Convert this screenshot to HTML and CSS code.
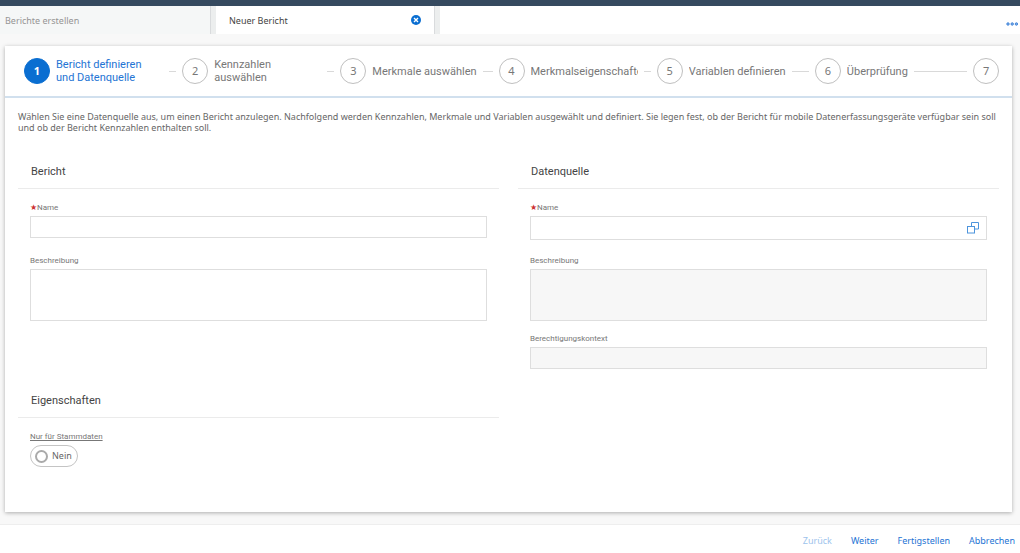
FILE: index.html
```html
<!DOCTYPE html>
<html lang="de">
<head>
    <meta charset="UTF-8">
    <meta name="viewport" content="width=device-width, initial-scale=1.0">
    <title>Neuer Bericht</title>
    <link rel="stylesheet" href="styles.css">
</head>
<body>
    <header class="tab-bar">
        <nav class="tabs">
            <a href="#" class="tab">Berichte erstellen</a>
            <div class="tab active">
                <span>Neuer Bericht</span>
                <button type="button" class="icon-button" aria-label="Schließen">
                    <svg width="10" height="10" viewBox="0 0 10 10">
                        <circle cx="5" cy="5" r="5" fill="#0a6ed1"/>
                        <path d="M3 3l4 4M7 3l-4 4" stroke="#fff" stroke-width="1.4"/>
                    </svg>
                </button>
            </div>
        </nav>
        <button type="button" class="icon-button more" aria-label="Mehr">
            <svg width="14" height="4" viewBox="0 0 14 4" fill="#8db6e8" stroke="#3f83d9">
                <circle cx="2" cy="2" r="1.2"/>
                <circle cx="6.2" cy="2" r="1.2"/>
                <circle cx="10.4" cy="2" r="1.2"/>
            </svg>
        </button>
    </header>

    <main>
        <form class="card" id="reportForm">
            <ol class="steps">
                <li class="step current"><span class="number">1</span><span class="step-label">Bericht definieren und&nbsp;Datenquelle</span></li>
                <li class="step"><span class="number">2</span><span class="step-label">Kennzahlen auswählen</span></li>
                <li class="step"><span class="number">3</span><span class="step-label">Merkmale auswählen</span></li>
                <li class="step"><span class="number">4</span><span class="step-label">Merkmalseigenschaften</span></li>
                <li class="step"><span class="number">5</span><span class="step-label">Variablen definieren</span></li>
                <li class="step"><span class="number">6</span><span class="step-label">Überprüfung</span></li>
                <li class="step"><span class="number">7</span></li>
            </ol>

            <div class="content">
                <p class="intro">Wählen Sie eine Datenquelle aus, um einen Bericht anzulegen. Nachfolgend werden Kennzahlen, Merkmale und Variablen ausgewählt und definiert. Sie legen fest, ob der Bericht für mobile Datenerfassungsgeräte verfügbar sein soll und ob der Bericht Kennzahlen enthalten soll.</p>

                <div class="sections">
                    <section>
                        <h2>Bericht</h2>
                        <div class="fields">
                            <div class="field name-field">
                                <label for="reportName" class="required">Name</label>
                                <input type="text" id="reportName" required>
                            </div>
                            <div class="field">
                                <label for="reportDescription">Beschreibung</label>
                                <textarea id="reportDescription"></textarea>
                            </div>
                        </div>
                    </section>

                    <section>
                        <h2>Datenquelle</h2>
                        <div class="fields">
                            <div class="field name-field">
                                <label for="sourceName" class="required">Name</label>
                                <div class="value-help">
                                    <input type="text" id="sourceName" required>
                                    <button type="button" class="icon-button" aria-label="Datenquelle auswählen">
                                        <svg width="12" height="12" viewBox="0 0 12 12" fill="none" stroke="#4d94dc">
                                            <path d="M4.5 4V.5h7v6.500H8"/>
                                            <rect x="0.500" y="4.500" width="7" height="6.500"/>
                                        </svg>
                                    </button>
                                </div>
                            </div>
                            <div class="field">
                                <label for="sourceDescription">Beschreibung</label>
                                <textarea id="sourceDescription" disabled></textarea>
                            </div>
                            <div class="field">
                                <label for="context">Berechtigungskontext</label>
                                <input type="text" id="context" disabled>
                            </div>
                        </div>
                    </section>

                    <section>
                        <h2>Eigenschaften</h2>
                        <div class="fields">
                            <div class="field">
                                <label for="masterData" class="underlined">Nur für Stammdaten</label>
                                <label class="switch"><input type="checkbox" id="masterData"><span>Nein</span></label>
                            </div>
                        </div>
                    </section>
                </div>
            </div>
        </form>
    </main>

    <footer class="actions">
        <button type="button" disabled>Zurück</button>
        <button type="button">Weiter</button>
        <button type="submit" form="reportForm">Fertigstellen</button>
        <button type="button">Abbrechen</button>
    </footer>
</body>
</html>
```
FILE: styles.css
```css
* {
    box-sizing: border-box;
}

body {
    margin: 0;
    min-height: 100vh;
    display: flex;
    flex-direction: column;
    font-family: "Noto Sans", Arial, sans-serif;
    font-size: 9px;
    color: #666;
    background-color: #f8f8f8;
}

button, input, textarea {
    font: inherit;
    color: inherit;
}

button {
    padding: 0;
    border: none;
    background: none;
    cursor: pointer;
}

.icon-button {
    display: flex;
}

/* Tabs */
.tab-bar {
    display: flex;
    justify-content: space-between;
    border-top: 6px solid #354a5f;
    background-color: white;
}

.tabs {
    display: flex;
}

.tab {
    display: flex;
    align-items: center;
    justify-content: space-between;
    width: 216px;
    height: 28px;
    padding-left: 5px;
    border-right: 5px solid #eceeee;
    box-shadow: inset -1px 0 #d9dbdd;
    background-color: #f5f7f7;
    color: #959595;
    text-decoration: none;
}

.tab.active {
    width: 224px;
    padding: 0 14px 0 13px;
    background-color: white;
    color: #444;
}

.more {
    align-items: center;
    padding-top: 7px;
}

/* Wizard */
main {
    flex: 1;
    display: flex;
    padding: 12px 8px 12px 5px;
}

.card {
    flex: 1;
    min-width: 0;
    background-color: white;
    box-shadow: 0 1px 4px rgba(0, 0, 0, 0.3);
}

.steps {
    display: flex;
    align-items: center;
    height: 52px;
    margin: 0;
    padding: 0 13px 0 19px;
    border-bottom: 2px solid #d1e0ee;
    list-style: none;
    font-family: Roboto, Arial, sans-serif;
    font-size: 11px;
    line-height: 13px;
    color: #777;
}

.step {
    flex: 1;
    display: flex;
    align-items: center;
    gap: 6px;
    min-width: 0;
    padding-right: 6px;
}

.step:last-child {
    flex: none;
    padding-right: 0;
}

.step:not(:last-child)::after {
    content: "";
    flex: 1 0 7px;
    height: 1px;
    background-color: #d9d9d9;
}

.number {
    flex: none;
    width: 26px;
    height: 26px;
    border: 1px solid #bfbfbf;
    border-radius: 50%;
    font-family: "Noto Sans", Arial, sans-serif;
    line-height: 24px;
    text-align: center;
}

.step-label {
    min-width: 0;
    overflow: hidden;
}

.current {
    color: #2474d4;
}

.current .number {
    border-color: #0a6ed1;
    background-color: #0a6ed1;
    color: white;
    font-weight: bold;
}

.content {
    padding: 13px;
}

.intro {
    margin: 0 0 22px;
    line-height: 11px;
}

/* Form */
.sections {
    display: grid;
    grid-template-columns: 1fr 1fr;
    gap: 15px 19px;
}

h2 {
    margin: 0;
    padding: 0 13px;
    border-bottom: 1px solid #ebebeb;
    font-family: Roboto, Arial, sans-serif;
    font-size: 11px;
    font-weight: normal;
    line-height: 33px;
    color: #444;
}

.fields {
    display: flex;
    flex-direction: column;
    gap: 12px;
    padding: 13px 12px 0;
}

.field {
    display: flex;
    flex-direction: column;
    align-items: flex-start;
    gap: 2px;
}

.name-field {
    min-height: 41px;
}

label {
    font-family: Roboto, Arial, sans-serif;
    font-size: 8px;
    line-height: 12px;
    color: #777;
}

.required::before {
    content: "★";
    color: #c33;
}

.underlined {
    text-decoration: underline;
}

input[type="text"], textarea {
    width: 100%;
    height: 22px;
    padding: 0 6px;
    border: 1px solid #dedede;
    border-radius: 0;
    background-color: white;
}

textarea {
    height: 52px;
    resize: none;
}

input:disabled, textarea:disabled {
    background-color: #f7f7f7;
}

.value-help {
    display: flex;
    align-items: center;
    width: 100%;
    height: 24px;
    padding-right: 7px;
    border: 1px solid #dedede;
}

.value-help input[type="text"] {
    border: none;
}

.switch {
    display: flex;
    align-items: center;
    gap: 4px;
    height: 22px;
    padding: 0 5px 0 4px;
    border: 1px solid #c4c4c4;
    border-radius: 11px;
    font-family: inherit;
    font-size: 9px;
    color: #666;
}

.switch input {
    appearance: none;
    width: 13px;
    height: 13px;
    margin: 0;
    border: 2px solid #aaa;
    border-radius: 50%;
}

.switch input:checked {
    border-color: #0a6ed1;
}

/* Footer */
.actions {
    display: flex;
    justify-content: flex-end;
    gap: 19px;
    height: 29px;
    padding: 3px 5px 0;
    border-top: 1px solid #eee;
    background-color: white;
    color: #2474d4;
}

.actions button:disabled {
    color: #9dc3ec;
    cursor: default;
}
```
